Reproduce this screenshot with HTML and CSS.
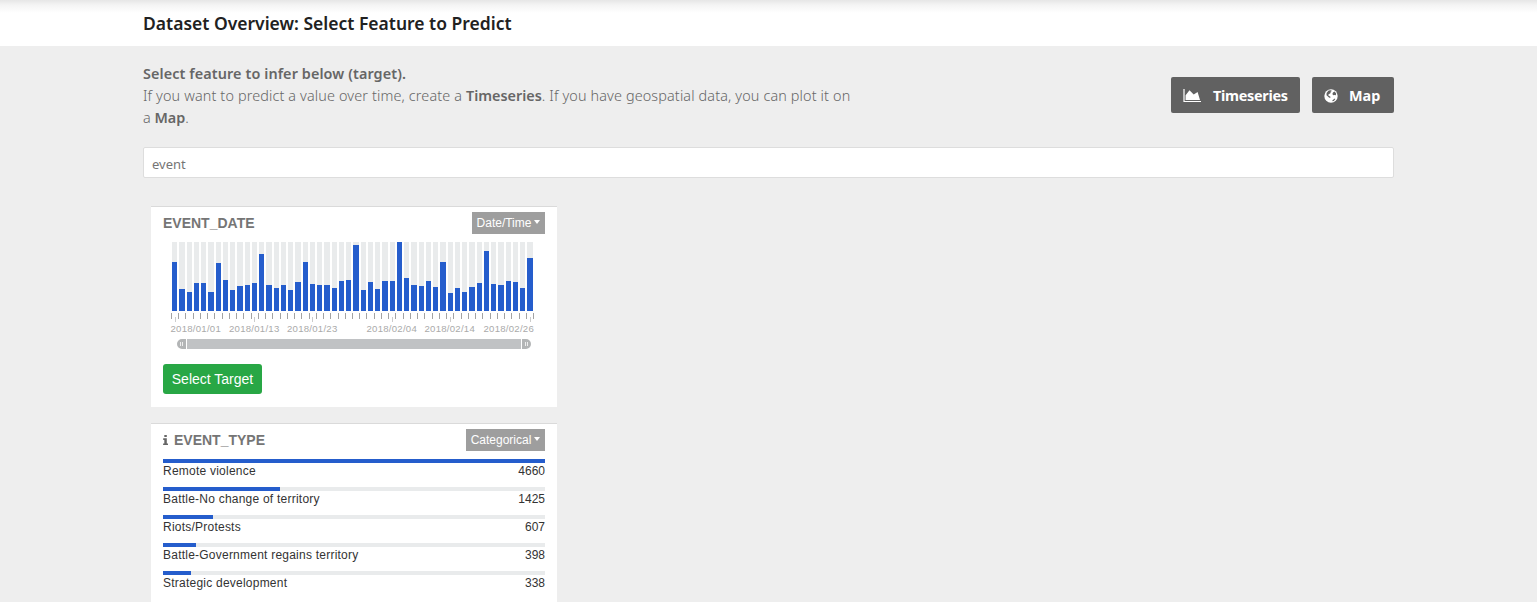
FILE: index.html
```
<!DOCTYPE html>
<html lang="en">
<head>
<meta charset="utf-8">
<title>Dataset Overview</title>
<link rel="stylesheet" href="styles.css">
</head>
<body>
<header class="header"><h1 class="title">Dataset Overview: Select Feature to Predict</h1></header>
<main class="main">
  <section class="intro">
    <div class="intro-text">
      <p class="line lead"><b>Select feature to infer below (target).</b></p>
      <p class="line wide">If you want to predict a value over time, create a <b>Timeseries</b>. If you have geospatial data, you can plot it on</p>
      <p class="line">a <b>Map</b>.</p>
    </div>
    <div class="actions">
      <button class="btn btn-time"><svg width="19" height="14" viewBox="0 0 19 14"><path d="M1 0v12.5h17" fill="none" stroke="#fff" stroke-width="1.2"/><path d="M2.6 11V6.2L6.5 1.2l4.2 4.4 3.9-2.6L17 11z" fill="#fff"/></svg><span>Timeseries</span></button>
      <button class="btn btn-map"><svg width="14" height="14" viewBox="0 0 14 14"><circle cx="7" cy="7" r="6.7" fill="#fff"/><path d="M4.6 1.6 7 1.2l.9.9-1.4.7.2 1.1-1.5 1L4 6l1.2.9 1.3.9-.3 1.3-1.2-.6-1.4-1.3-1.1-.9.1-2.2zM9 3.6l1.6-1 1.6 1.8-.4 1.8-1.6-.2-1 .2-.8-1.2z" fill="#616161"/><path d="M8.4 11.2l2.4-1.6.6.5-1.6 1.8-1.3.3z" fill="#616161"/></svg><span>Map</span></button>
    </div>
  </section>
  <input class="search" type="text" value="event">
  <section class="cards">
    <article class="card card-date">
      <div class="card-head"><h2 class="name">EVENT_DATE</h2><span class="type type-date">Date/Time<i class="caret"></i></span></div>
      <div class="chart">
        <div class="bars">
          <i><b style="height:49px"></b></i><i><b style="height:22px"></b></i><i><b style="height:19px"></b></i><i><b style="height:28px"></b></i><i><b style="height:28px"></b></i><i><b style="height:19px"></b></i><i><b style="height:48px"></b></i><i><b style="height:31px"></b></i><i><b style="height:21px"></b></i><i><b style="height:25px"></b></i>
          <i><b style="height:26px"></b></i><i><b style="height:28px"></b></i><i><b style="height:57px"></b></i><i><b style="height:26px"></b></i><i><b style="height:23px"></b></i><i><b style="height:26px"></b></i><i><b style="height:21px"></b></i><i><b style="height:29px"></b></i><i><b style="height:49px"></b></i><i><b style="height:27px"></b></i>
          <i><b style="height:26px"></b></i><i><b style="height:26px"></b></i><i><b style="height:23px"></b></i><i><b style="height:30px"></b></i><i><b style="height:31px"></b></i><i><b style="height:66px"></b></i><i><b style="height:21px"></b></i><i><b style="height:29px"></b></i><i><b style="height:22px"></b></i><i><b style="height:30px"></b></i>
          <i><b style="height:30px"></b></i><i><b style="height:69px"></b></i><i><b style="height:33px"></b></i><i><b style="height:26px"></b></i><i><b style="height:25px"></b></i><i><b style="height:30px"></b></i><i><b style="height:24px"></b></i><i><b style="height:49px"></b></i><i><b style="height:18px"></b></i><i><b style="height:23px"></b></i>
          <i><b style="height:19px"></b></i><i><b style="height:24px"></b></i><i><b style="height:28px"></b></i><i><b style="height:60px"></b></i><i><b style="height:27px"></b></i><i><b style="height:26px"></b></i><i><b style="height:30px"></b></i><i><b style="height:29px"></b></i><i><b style="height:23px"></b></i><i><b style="height:53px"></b></i>
        </div>
        <svg class="axis" width="376" height="42" viewBox="163 311 376 42">
          <path d="M171 316H535" stroke="#a3a3a3" stroke-width="6" stroke-dasharray="1 6.24" shape-rendering="crispEdges"/>
          <path d="M175.5 317v5M254.5 317v5M312.5 317v5M392.5 317v5M450.5 317v5M530.5 317v5" stroke="#ccc"/>
          <g class="dates">
            <text x="170.5" y="332">2018/01/01</text><text x="229" y="332">2018/01/13</text><text x="287" y="332">2018/01/23</text><text x="366.5" y="332">2018/02/04</text><text x="424.5" y="332">2018/02/14</text><text x="483.5" y="332">2018/02/26</text>
          </g>
          <path d="M187 339H521V349H187z" fill="#c0c2c4"/>
          <path d="M186 339h-4a5 5 0 0 0 0 10h4zM522 339h4a5 5 0 0 1 0 10h-4z" fill="#b3b5b6"/>
          <path d="M180.5 342v4M182.5 342v4M525.5 342v4M527.5 342v4" stroke="#eee"/>
        </svg>
      </div>
      <button class="select">Select Target</button>
    </article>
    <article class="card card-type">
      <div class="card-head"><h2 class="name"><svg class="info" width="6" height="10" viewBox="0 0 6 10"><path d="M1.3 0h2.5v2H1.3zM.2 3.3h3.6v5.1H5V10H.1V8.4h1.2V4.9H.2z" fill="#666"/></svg>EVENT_TYPE</h2><span class="type type-cat">Categorical<i class="caret"></i></span></div>
      <div class="row"><div class="meter"><i style="width:382px"></i></div><div class="data"><span class="label">Remote violence</span><span>4660</span></div></div>
      <div class="row"><div class="meter"><i style="width:117px"></i></div><div class="data"><span class="label">Battle-No change of territory</span><span>1425</span></div></div>
      <div class="row"><div class="meter"><i style="width:50px"></i></div><div class="data"><span class="label">Riots/Protests</span><span>607</span></div></div>
      <div class="row"><div class="meter"><i style="width:33px"></i></div><div class="data"><span class="label">Battle-Government regains territory</span><span>398</span></div></div>
      <div class="row"><div class="meter"><i style="width:28px"></i></div><div class="data"><span class="label">Strategic development</span><span>338</span></div></div>
    </article>
  </section>
</main>
</body>
</html>
```
FILE: styles.css
```
* { box-sizing: border-box; }
body { margin: 0; height: 602px; overflow: hidden; background: #eee; font-family: "Liberation Sans", Arial, sans-serif; }
.header { height: 46px; padding: 9px 143px 0; background: linear-gradient(#e6e6e6, #f4f4f4 5px, #fff 13px); }
.title { margin: 0; font: 600 17.5px/28px "Noto Sans", "Open Sans", sans-serif; color: #212121; white-space: nowrap; }
.main { padding: 17px 143px 0; }
.intro { height: 84px; display: flex; justify-content: space-between; }
.intro-text { font: 300 14.4px/22px "Noto Sans", "Open Sans", sans-serif; color: #666; white-space: nowrap; }
.line { margin: 0; }
.line b { font-weight: 600; letter-spacing: 0; }
.wide { letter-spacing: 0.135px; }
.lead b { letter-spacing: 0.1px; }
.actions { display: flex; gap: 12px; padding-top: 14px; }
.btn { display: flex; align-items: center; height: 36px; padding: 0 0 0 12px; border: 0; border-radius: 2px; background: #616161; color: #fff; font: 700 14.4px/22px "Noto Sans", "Open Sans", sans-serif; white-space: nowrap; }
.btn span { padding-top: 2px; }
.btn svg { margin-top: 1px; }
.btn-time { width: 129px; gap: 11px; letter-spacing: -0.3px; }
.btn-map { width: 82px; gap: 11px; }
.search { display: block; width: 1251px; height: 31px; padding: 3px 8px 0; border: 1px solid #ddd; border-radius: 2px; background: #fff; color: #757575; font: 400 13px/20px "Noto Sans", "Open Sans", sans-serif; }
.cards { display: flex; flex-direction: column; gap: 16px; width: 406px; margin: 28px 0 0 8px; }
.card { padding: 5px 12px 0; border-top: 1px solid #dadada; background: #fff; }
.card-date { height: 201px; }
.card-type { height: 179px; }
.card-head { display: flex; justify-content: space-between; height: 22px; }
.name { display: flex; align-items: center; margin: 0; font-size: 14px; line-height: 22px; color: #757575; }
.info { margin-right: 5px; }
.type { display: flex; align-items: center; justify-content: center; gap: 3px; height: 22px; background: #9e9e9e; color: #fff; font-size: 12px; line-height: 22px; }
.type-date { width: 73px; }
.type-cat { width: 79px; }
.caret { border: 3.5px solid transparent; border-top: 4px solid #fff; border-bottom: 0; margin-top: -2px; }
.chart { margin-top: 8px; }
.bars { display: flex; height: 69px; padding-left: 9.1px; }
.bars i { display: flex; align-items: flex-end; flex: none; width: 5.3px; margin-right: 1.953125px; height: 69px; background: #e9ebec; }
.bars b { width: 100%; background: #255dcc; }
.axis { display: block; }
.dates { font-size: 9.6px; letter-spacing: 0.25px; fill: #aaa; }
.select { display: block; width: 99px; height: 30px; margin-top: 11px; padding: 0; border: 0; border-radius: 3px; background: #28a745; color: #fff; font: 400 14px/30px "Liberation Sans", Arial, sans-serif; }
.row { height: 28px; }
.card-head + .row { margin-top: 8px; }
.meter { height: 4px; background: #e9ebec; }
.meter i { display: block; height: 4px; background: #255dcc; }
.data { display: flex; justify-content: space-between; font-size: 12px; line-height: 14px; padding-top: 1px; color: #333; }
.label { letter-spacing: 0.23px; }
```
